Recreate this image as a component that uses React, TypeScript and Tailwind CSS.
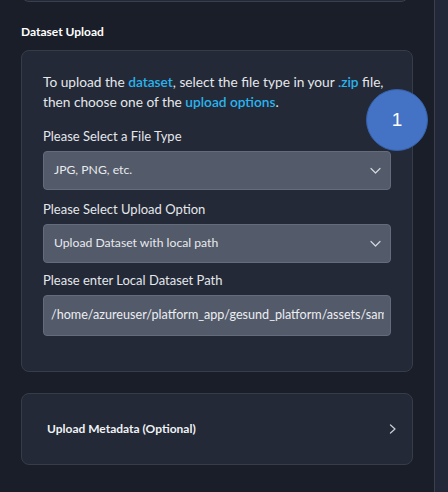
const font = { fontFamily: 'Lato, "Noto Sans", sans-serif' }

const Chevron = ({ dir }: { dir: 'down' | 'right' }) =>
  dir === 'down' ? (
    <svg width="11" height="8" viewBox="0 0 11 8" fill="none" className="text-[#d3d7de]">
      <path d="M1 1.5 L5.5 6 L10 1.5" stroke="currentColor" strokeWidth="1.2" strokeLinecap="round" strokeLinejoin="round" />
    </svg>
  ) : (
    <svg width="8" height="10" viewBox="0 0 8 10" fill="none" className="text-[#c8ccd3]">
      <path d="M1.5 1 L6 5 L1.5 9" stroke="currentColor" strokeWidth="1.3" strokeLinecap="round" strokeLinejoin="round" />
    </svg>
  )

const SelectBox = ({ value }: { value: string }) => (
  <div className="flex h-[39px] items-center justify-between rounded-[4px] border border-[#646b7a] bg-[#535a69] pl-[10px] pr-[9px]">
    <span className="text-[12.2px] text-[#e8eaee]">{value}</span>
    <Chevron dir="down" />
  </div>
)

export default function App() {
  return (
    <div className="flex h-[492px] w-[448px] overflow-hidden bg-[#1a1e28]" style={font}>
      <div className="relative flex w-[434px] flex-col pl-[21px] pr-[21px]">
        {/* bottom of the card above */}
        <div className="-mt-[10px] h-[12px] w-[388px] rounded-b-[8px] border border-[#3a3f4d] bg-[#232936]" />

        <h2 className="mt-[22px] text-[12px] leading-[16px] font-bold text-white">Dataset Upload</h2>

        <div className="mt-[10px] h-[322px] rounded-[8px] border border-[#363c4a] bg-[#232936] px-[21px] pt-[21px]">
          <p className="text-[13.7px] leading-[20px] text-[#e4e7ec]">
            To upload the <span className="font-semibold text-[#2ab4ef]">dataset</span>, select the file type in your{' '}
            <span className="font-semibold text-[#2ab4ef]">.zip</span> file, then choose one of the{' '}
            <span className="font-semibold text-[#2ab4ef]">upload options</span>.
          </p>

          <div className="mt-[15px] text-[13px] leading-[18px] text-[#e4e7ec]">Please Select a File Type</div>
          <div className="mt-[6px]">
            <SelectBox value="JPG, PNG, etc." />
          </div>

          <div className="mt-[10px] text-[13px] leading-[18px] text-[#e4e7ec]">Please Select Upload Option</div>
          <div className="mt-[6px]">
            <SelectBox value="Upload Dataset with local path" />
          </div>

          <div className="mt-[8px] text-[13px] leading-[18px] text-[#e4e7ec]">Please enter Local Dataset Path</div>
          <div className="mt-[6px] flex h-[41px] items-center rounded-[4px] border border-[#646b7a] bg-[#535a69] pl-[7px] pr-[6px]">
            <div className="overflow-hidden whitespace-nowrap text-[12.6px] text-[#eceef2]">
              /home/azureuser/platform_app/gesund_platform/assets/sample_datasets
            </div>
          </div>
        </div>

        <div className="mt-[21px] flex h-[72px] items-center justify-between rounded-[8px] border border-[#363c4a] bg-[#232936] pl-[25px] pr-[15px]">
          <span className="text-[12px] font-bold text-[#f0f2f5]">Upload Metadata (Optional)</span>
          <Chevron dir="right" />
        </div>

        {/* step marker */}
        <div className="absolute left-[366px] top-[89px] flex h-[62px] w-[62px] items-center justify-center rounded-full border border-[#3660a8] bg-[#4472c4]">
          <span className="text-[19px] text-white" style={{ fontFamily: '"Liberation Sans", sans-serif' }}>1</span>
        </div>
      </div>
      <div className="w-[14px] border-l border-[#3a4050] bg-[#232838]" />
    </div>
  )
}
